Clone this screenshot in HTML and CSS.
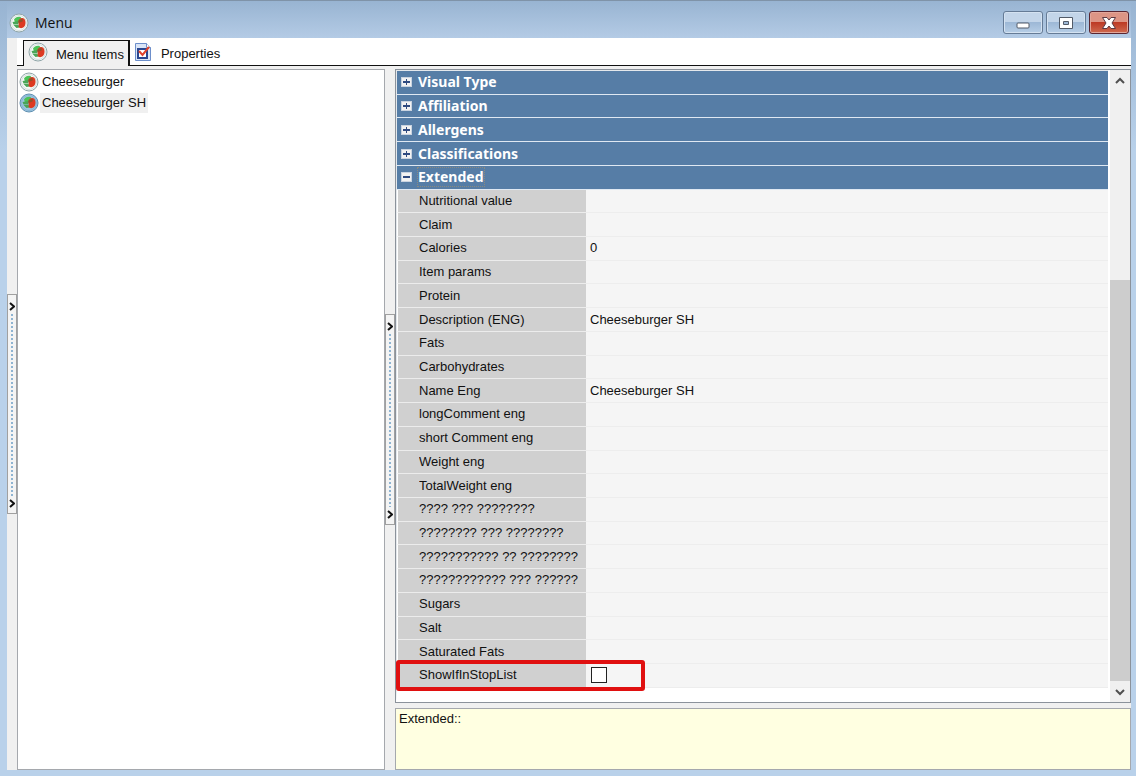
FILE: index.html
```
<!DOCTYPE html>
<html lang="en">
<head>
    <meta charset="UTF-8">
    <meta name="viewport" content="width=device-width, initial-scale=1.0">
    <title>Menu</title>
    <link rel="stylesheet" href="styles.css">
</head>
<body>
    <svg width="0" height="0" class="defs" aria-hidden="true">
        <symbol id="dish" viewBox="0 0 20 20">
            <circle class="plate" cx="10" cy="10" r="9"/>
            <circle class="rim" cx="10" cy="10" r="7.5"/>
            <path d="M5 6.500c1-2 4-3.500 6.500-2.500l1.500 2-2 3.500-5 0z" fill="#4cc257"/>
            <path d="M3.500 9l6-1v3l-5 .5zM4.500 12l5-.5 1 3-3 .5z" fill="#4aa558"/>
            <path d="M9.500 8c1-3 4-4 6-2 1.500 2 1.500 6-.5 8-1.500 1.500-4.500 1.500-5.500 0 .5-1.500 0-4 0-6z" fill="#dc3a22"/>
            <path d="M9.500 7.500l3-1.500 1.500.5-.5 2-4 1.500z" fill="#93502a"/>
        </symbol>
    </svg>

    <div class="window">
        <header class="titlebar">
            <svg class="icon"><use href="#dish"/></svg>
            <h1>Menu</h1>
            <div class="window-buttons">
                <button type="button" aria-label="Minimize">
                    <svg width="14" height="14"><rect x="1" y="7" width="12" height="5" rx="1" fill="#fff" stroke="#535b68"/></svg>
                </button>
                <button type="button" aria-label="Maximize">
                    <svg width="14" height="14"><path fill-rule="evenodd" d="M.5 1.500h13v11H.5zM4.500 5.500h5v3h-5z" fill="#fff" stroke="#535b68"/></svg>
                </button>
                <button type="button" class="close" aria-label="Close">
                    <svg width="14" height="14"><path d="M.5 1.500h4.500l2 2.500 2-2.500h4.500L10 7l3.500 5.500H9L7 10l-2 2.500H.5L4 7z" fill="#fff" stroke="#5b3a42"/></svg>
                </button>
            </div>
        </header>

        <div class="content">
            <div class="splitter">
                <button type="button" class="handle" aria-label="Show side panel">
                    <svg width="6" height="9"><path d="M1 1l4 3.500-4 3.500"/></svg>
                    <span class="dots"></span>
                    <svg width="6" height="9"><path d="M1 1l4 3.500-4 3.500"/></svg>
                </button>
            </div>

            <main>
                <nav class="tabs">
                    <button type="button" class="tab active">
                        <svg class="icon"><use href="#dish"/></svg>
                        Menu Items
                    </button>
                    <button type="button" class="tab">
                        <svg class="icon" viewBox="0 0 20 20">
                            <path d="M2.500 1.500h11l4 4v13h-15z" fill="#dbe6f7" stroke="#6d8fcb"/>
                            <path d="M13.500 1.500v4h4" fill="#fff" stroke="#6d8fcb"/>
                            <rect x="5" y="7" width="9" height="9" fill="#fff" stroke="#2a4790" stroke-width="2"/>
                            <path d="M6 9l3.500 4L16 5" fill="none" stroke="#e0432c" stroke-width="2"/>
                        </svg>
                        Properties
                    </button>
                </nav>

                <div class="panes">
                    <ul class="items">
                        <li><svg class="icon"><use href="#dish"/></svg><a href="#">Cheeseburger</a></li>
                        <li class="selected"><svg class="icon"><use href="#dish"/></svg><a href="#">Cheeseburger SH</a></li>
                    </ul>

                    <div class="splitter">
                        <button type="button" class="handle" aria-label="Collapse list">
                            <svg width="6" height="9"><path d="M1 1l4 3.500-4 3.500"/></svg>
                            <span class="dots"></span>
                            <svg width="6" height="9"><path d="M1 1l4 3.500-4 3.500"/></svg>
                        </button>
                    </div>

                    <div class="details">
                        <div class="inspector">
                            <table>
                                <colgroup><col class="name-col"><col></colgroup>
                                <tbody>
                                    <tr class="group"><th colspan="2"><button type="button"><span class="toggle plus"></span>Visual Type</button></th></tr>
                                    <tr class="group"><th colspan="2"><button type="button"><span class="toggle plus"></span>Affiliation</button></th></tr>
                                    <tr class="group"><th colspan="2"><button type="button"><span class="toggle plus"></span>Allergens</button></th></tr>
                                    <tr class="group"><th colspan="2"><button type="button"><span class="toggle plus"></span>Classifications</button></th></tr>
                                    <tr class="group"><th colspan="2"><button type="button"><span class="toggle"></span><span class="current">Extended</span></button></th></tr>
                                    <tr><th><span>Nutritional value</span></th><td></td></tr>
                                    <tr><th><span>Claim</span></th><td></td></tr>
                                    <tr><th><span>Calories</span></th><td>0</td></tr>
                                    <tr><th><span>Item params</span></th><td></td></tr>
                                    <tr><th><span>Protein</span></th><td></td></tr>
                                    <tr><th><span>Description (ENG)</span></th><td>Cheeseburger SH</td></tr>
                                    <tr><th><span>Fats</span></th><td></td></tr>
                                    <tr><th><span>Carbohydrates</span></th><td></td></tr>
                                    <tr><th><span>Name Eng</span></th><td>Cheeseburger SH</td></tr>
                                    <tr><th><span>longComment eng</span></th><td></td></tr>
                                    <tr><th><span>short Comment eng</span></th><td></td></tr>
                                    <tr><th><span>Weight eng</span></th><td></td></tr>
                                    <tr><th><span>TotalWeight eng</span></th><td></td></tr>
                                    <tr><th><span>???? ??? ????????</span></th><td></td></tr>
                                    <tr><th><span>???????? ??? ????????</span></th><td></td></tr>
                                    <tr><th><span>??????????? ?? ????????</span></th><td></td></tr>
                                    <tr><th><span>???????????? ??? ??????</span></th><td></td></tr>
                                    <tr><th><span>Sugars</span></th><td></td></tr>
                                    <tr><th><span>Salt</span></th><td></td></tr>
                                    <tr><th><span>Saturated Fats</span></th><td></td></tr>
                                    <tr><th><label for="showIfInStopList">ShowIfInStopList</label><i class="marker"></i></th><td><input type="checkbox" id="showIfInStopList"></td></tr>
                                </tbody>
                            </table>
                            <div class="scrollbar">
                                <button type="button" aria-label="Scroll up"><svg width="10" height="8"><path d="M1 6l4-4 4 4"/></svg></button>
                                <div class="track"><div class="thumb"></div></div>
                                <button type="button" aria-label="Scroll down"><svg width="10" height="8"><path d="M1 2l4 4 4-4"/></svg></button>
                            </div>
                        </div>
                        <p class="hint">Extended::</p>
                    </div>
                </div>
            </main>
        </div>
    </div>
</body>
</html>
```

FILE: styles.css
```
* {
    box-sizing: border-box;
}

body {
    margin: 0;
    font-family: "Liberation Sans", Arial, sans-serif;
    font-size: 13px;
    line-height: 18px;
    color: #111;
}

button {
    margin: 0;
    padding: 0;
    border: none;
    background: none;
    font: inherit;
    color: inherit;
}

.defs {
    position: absolute;
}

.icon {
    --plate: #f6faf8;
    --plate-edge: #8fa5a8;
    flex: none;
    width: 20px;
    height: 20px;
}

.plate {
    fill: var(--plate);
    stroke: var(--plate-edge);
}

.rim {
    fill: none;
    stroke: var(--plate-edge);
    opacity: 0.3;
}

/* window frame */
.window {
    display: flex;
    flex-direction: column;
    height: 100vh;
    padding: 0 5px 6px 7px;
    border-top: 1px solid #7f93a8;
    background: linear-gradient(#98b4d2, #b9d1ea 150px);
}

.titlebar {
    display: flex;
    align-items: center;
    height: 37px;
    padding: 6px 2px 0;
    gap: 6px;
    background: linear-gradient(#98b4d2, #b4cbe5);
}

.titlebar h1 {
    flex: 1;
    margin: 0;
    font-family: "Open Sans", sans-serif;
    font-size: 14px;
    font-weight: 400;
}

.window-buttons {
    display: flex;
    gap: 3px;
}

.window-buttons button {
    display: flex;
    align-items: center;
    justify-content: center;
    width: 40px;
    height: 23px;
    border: 1px solid #657b96;
    border-radius: 3px;
    background: linear-gradient(#c3d5e9 50%, #9db8d6 50%, #b7cee6);
    box-shadow: inset 0 0 0 1px #d4e2f1;
}

.window-buttons .close {
    border-color: #5a2530;
    background: linear-gradient(#dd9585 50%, #bd3a25 50%, #cf6b50);
    box-shadow: inset 0 0 0 1px #e2a79b;
}

.content {
    display: flex;
    flex: 1;
    min-height: 0;
    background: #f0f0f0;
}

.splitter {
    display: flex;
    align-items: center;
    flex: none;
    width: 10px;
}

.handle {
    display: flex;
    flex-direction: column;
    align-items: center;
    width: 10px;
    height: 30%;
    padding: 7px 0 5px;
    gap: 3px;
    border: 1px solid #a0a0a0;
    background: #f4f4f4;
}

.handle path {
    fill: none;
    stroke: #111;
    stroke-width: 2;
}

.dots {
    flex: 1;
    width: 2px;
    background: repeating-linear-gradient(#8fb4d2 0 2px, transparent 2px 4px);
}

main {
    display: flex;
    flex: 1;
    flex-direction: column;
    min-width: 0;
}

/* tabs */
.tabs {
    display: flex;
    height: 28px;
    padding: 2px 6px 0;
    border-bottom: 1px solid #111;
    background: #fff;
}

.tab {
    display: flex;
    align-items: center;
    padding: 3px 3px 0;
    gap: 8px;
}

.tab .icon {
    margin-bottom: 5px;
}

.tab.active {
    height: 26px;
    padding: 2px 4px 0;
    border: solid #111;
    border-width: 1px 2px 0 1px;
    background: #f0f0f0;
}

.panes {
    display: grid;
    grid-template-columns: minmax(0, 1fr) 10px minmax(0, 2fr);
    flex: 1;
    min-height: 0;
    padding-top: 3px;
}

.items {
    margin: 0;
    padding: 1px;
    border: 1px solid #a5a8ad;
    background: #fff;
    list-style: none;
}

.items li {
    display: flex;
    align-items: center;
    height: 21px;
    gap: 1px;
}

.items a {
    padding: 1px 2px;
    color: inherit;
    text-decoration: none;
}

.selected a {
    background: #f0f0f0;
}

.selected .icon {
    --plate: #9cc6e2;
    --plate-edge: #5f8fb0;
}

/* property inspector */
.details {
    display: flex;
    flex-direction: column;
    gap: 5px;
}

.inspector {
    display: flex;
    flex: 1;
    min-height: 0;
    gap: 2px;
    border: 1px solid #8b929b;
    background: #fff;
}

table {
    flex: 1;
    height: 100%;
    border: solid #e4e8ec;
    border-width: 1px 0 0 1px;
    border-bottom: 14px solid #fff;
    border-spacing: 0;
    table-layout: fixed;
}

.name-col {
    width: 189px;
}

th,
td {
    padding: 0;
    text-align: left;
    font-weight: 400;
    white-space: nowrap;
}

th {
    position: relative;
    padding-left: 21px;
    border-left: 1px solid #fff;
    border-bottom: 1px solid #ececec;
    background: #d0d0d0;
}

th span,
th label {
    display: block;
    margin-right: 3px;
    overflow: hidden;
}

td {
    padding-left: 4px;
    border-bottom: 1px solid #ededed;
    background: #f5f5f5;
}

.group th {
    padding-left: 4px;
    border-left: none;
    border-bottom-color: #dfe8f2;
    background: #567da6;
}

.group button {
    display: flex;
    align-items: center;
    gap: 6px;
    font-family: "Noto Sans", sans-serif;
    font-size: 14px;
    font-weight: 700;
    color: #fff;
}

.group span {
    margin: 0;
}

.toggle {
    width: 11px;
    height: 10px;
    border: 1px solid #c9d3e0;
    background: linear-gradient(#2f4a80, #2f4a80) center / 7px 2px no-repeat #f2f2f2;
}

.toggle.plus {
    background: linear-gradient(#2f4a80, #2f4a80) center / 7px 2px no-repeat, linear-gradient(#2f4a80, #2f4a80) center / 1px 6px no-repeat #f2f2f2;
}

.current {
    outline: 1px dotted #8a8a80;
}

input[type="checkbox"] {
    display: block;
    width: 16px;
    height: 16px;
    margin: 0 1px;
    border: 1px solid #222;
    background: #fff;
    appearance: none;
}

.marker {
    position: absolute;
    top: -4px;
    left: -2px;
    z-index: 1;
    width: 249px;
    height: 31px;
    border: 4px solid #e01010;
    border-radius: 3px;
    pointer-events: none;
}

.scrollbar {
    display: flex;
    flex-direction: column;
    width: 20px;
    background: #f0f0f0;
}

.scrollbar button {
    height: 21px;
}

.scrollbar path {
    fill: none;
    stroke: #505050;
    stroke-width: 2;
}

.track {
    display: flex;
    flex: 1;
    flex-direction: column;
    justify-content: flex-end;
}

.thumb {
    height: 68%;
    background: #cdcdcd;
}

.hint {
    height: 62px;
    margin: 0;
    padding: 1px 3px;
    border: 1px solid #a5a8ad;
    background: #ffffe1;
}
```
